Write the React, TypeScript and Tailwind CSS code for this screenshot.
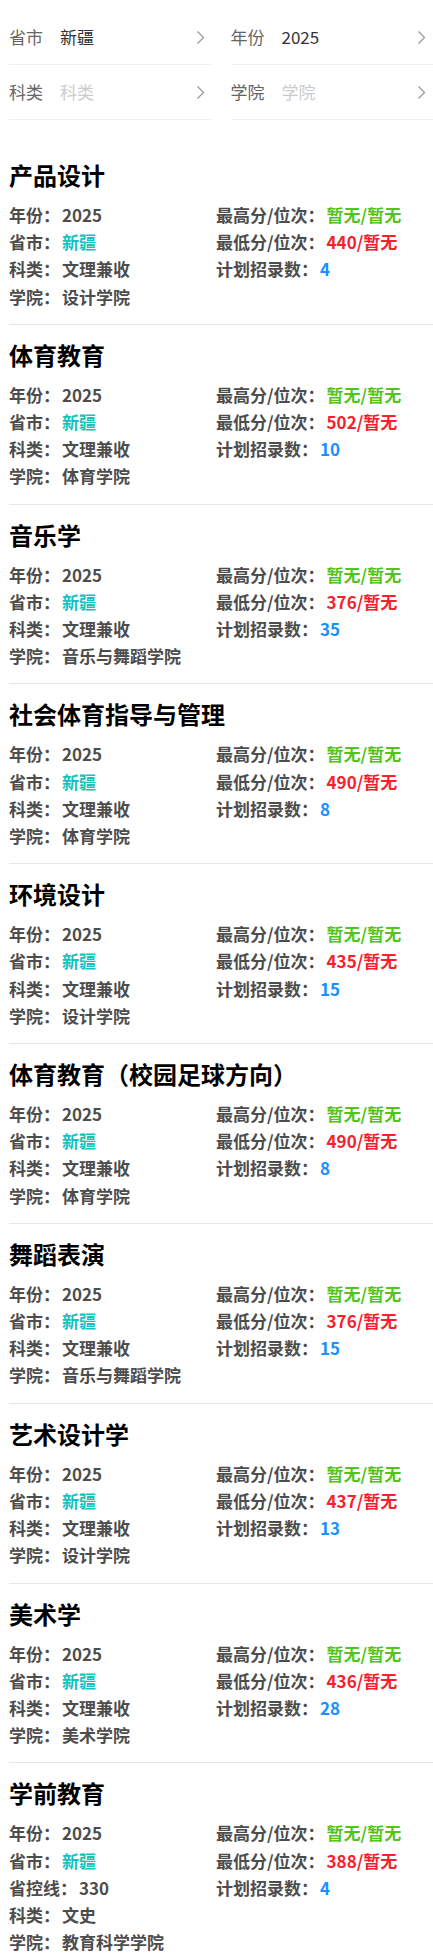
import React from 'react';

type Major = {
  name: string;
  college: string;
  type: string;
  low: string;
  plan: string;
  control?: string;
};

const majors: Major[] = [
  { name: '产品设计', college: '设计学院', type: '文理兼收', low: '440', plan: '4' },
  { name: '体育教育', college: '体育学院', type: '文理兼收', low: '502', plan: '10' },
  { name: '音乐学', college: '音乐与舞蹈学院', type: '文理兼收', low: '376', plan: '35' },
  { name: '社会体育指导与管理', college: '体育学院', type: '文理兼收', low: '490', plan: '8' },
  { name: '环境设计', college: '设计学院', type: '文理兼收', low: '435', plan: '15' },
  { name: '体育教育（校园足球方向）', college: '体育学院', type: '文理兼收', low: '490', plan: '8' },
  { name: '舞蹈表演', college: '音乐与舞蹈学院', type: '文理兼收', low: '376', plan: '15' },
  { name: '艺术设计学', college: '设计学院', type: '文理兼收', low: '437', plan: '13' },
  { name: '美术学', college: '美术学院', type: '文理兼收', low: '436', plan: '28' },
  { name: '学前教育', college: '教育科学学院', type: '文史', low: '388', plan: '4', control: '330' },
];

function Chevron() {
  return (
    <svg width="9" height="15" viewBox="0 0 9 15" fill="none" className="shrink-0">
      <path d="M1.5 1.5L7.5 7.5L1.5 13.5" stroke="#999" strokeWidth="1.3" />
    </svg>
  );
}

function FilterCell({ label, value, placeholder }: { label: string; value?: string; placeholder: string }) {
  return (
    <div className="flex h-[55px] items-center border-b border-[#f0f0f0] pr-[7px]">
      <span className="w-[51px] shrink-0 text-[#666]">{label}</span>
      <span className={value ? 'flex-1 text-[#333]' : 'flex-1 text-[#ccc]'}>{value || placeholder}</span>
      <Chevron />
    </div>
  );
}

function Line({ label, value, color = 'text-[#4d4d4d]' }: { label: string; value: string; color?: string }) {
  return (
    <div className="whitespace-nowrap leading-[27.2px]">
      <span className="text-[#4d4d4d]">{label}：</span>
      <span className={`ml-[2px] ${color}`}>{value}</span>
    </div>
  );
}

function MajorCard({ m }: { m: Major }) {
  return (
    <div className="border-b border-[#e8e8e8] pt-[12px] pb-[14px]">
      <h3 className="text-[24px] font-bold leading-[36px] text-black">{m.name}</h3>
      <div className="mt-[8px] flex text-[17px] font-bold">
        <div className="w-[207px] shrink-0">
          <Line label="年份" value="2025" />
          <Line label="省市" value="新疆" color="text-[#13c2c2]" />
          {m.control && <Line label="省控线" value={m.control} />}
          <Line label="科类" value={m.type} />
          <Line label="学院" value={m.college} />
        </div>
        <div className="flex-1">
          <Line label="最高分/位次" value="暂无/暂无" color="text-[#52c41a]" />
          <Line label="最低分/位次" value={`${m.low}/暂无`} color="text-[#f5222d]" />
          <Line label="计划招录数" value={m.plan} color="text-[#1890ff]" />
        </div>
      </div>
    </div>
  );
}

export default function App() {
  return (
    <div className="min-h-screen bg-white pl-[9px] font-['Noto_Sans_CJK_SC','Noto_Sans',sans-serif]">
      <div className="grid grid-cols-2 gap-x-[19px] pt-[10px] text-[17px]">
        <FilterCell label="省市" value="新疆" placeholder="省市" />
        <FilterCell label="年份" value="2025" placeholder="年份" />
        <FilterCell label="科类" placeholder="科类" />
        <FilterCell label="学院" placeholder="学院" />
      </div>
      <div className="mt-[25px]">
        {majors.map((m) => (
          <MajorCard key={m.name} m={m} />
        ))}
      </div>
    </div>
  );
}
